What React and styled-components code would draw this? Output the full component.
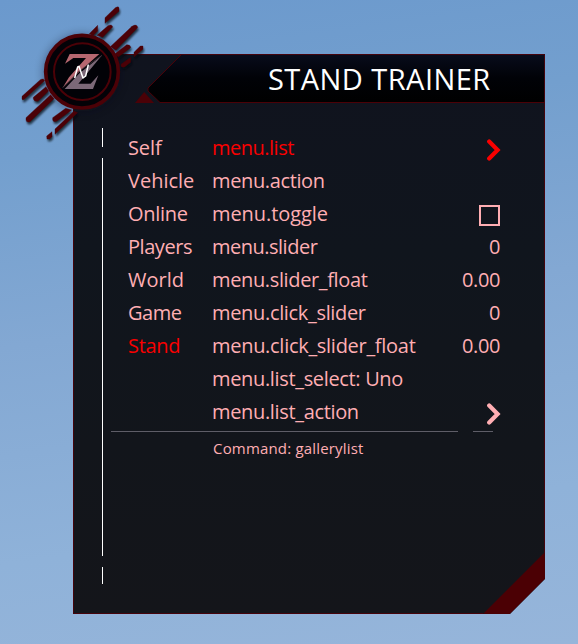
import React from "react";
import styled, { createGlobalStyle } from "styled-components";

const Global = createGlobalStyle`
  * { box-sizing: border-box; }
  html, body { margin: 0; height: 100%; overflow: hidden; }
  body { font-family: "Open Sans", "Noto Sans", sans-serif; }
`;

const Scene = styled.main`
  position: relative;
  width: 578px;
  height: 644px;
  padding: 53px 33px 30px 73px;
  background: linear-gradient(172deg, #6b99cd 0%, #739fce 22%, #83a8d3 48%, #8fb2d9 78%, #96b5da 100%);
`;

const Panel = styled.section`
  position: relative;
  display: flex;
  flex-direction: column;
  width: 472px;
  height: 561px;
  background: linear-gradient(#10131e, #10151d 35%, #12151b 70%, #14151a);
  clip-path: polygon(0 1px, 100% 1px, 100% 526px, 437px 100%, 0 100%);
`;

const Frame = styled.svg`
  position: absolute;
  inset: 0;
`;

const Header = styled.header`
  position: relative;
  height: 50px;
  padding-left: 195px;
  color: #fff;
  font-size: 29px;
  line-height: 52px;
  white-space: nowrap;
  letter-spacing: ${(p) => p.$spacing}px;
`;

const Content = styled.div`
  position: relative;
  display: grid;
  grid-template-columns: 26px 84px 288px;
  padding: 25px 0 0 29px;
`;

const Rail = styled.div`
  display: flex;
  flex-direction: column;
  gap: 11px;
  width: 1px;
`;

const RailPart = styled.i`
  height: ${(p) => p.$h}px;
  background: #fff;
`;

const List = styled.div`
  display: flex;
  flex-direction: column;
  padding-top: 3px;
`;

const Row = styled.div`
  display: flex;
  justify-content: space-between;
  height: 33px;
  line-height: 33px;
  font-size: 20px;
  white-space: nowrap;
  color: ${(p) => (p.$active ? "#fa0000" : "#ffaeb3")};
`;

const Label = styled.span`
  letter-spacing: ${(p) => p.$spacing || 0}px;
`;

const Chevron = styled.svg`
  width: 15px;
  height: 22px;
  margin: 8px -1px 0 0;
`;

const Checkbox = styled.span`
  width: 21px;
  height: 21px;
  margin-top: 8px;
  border: 2px solid #ffaeb3;
`;

const Divider = styled.div`
  display: flex;
  gap: 15px;
  margin: 3px 0 0 -101px;
`;

const Line = styled.i`
  width: ${(p) => p.$w}px;
  height: 1px;
  background: #5e5d67;
`;

const Help = styled.div`
  padding: 5px 0 0 1px;
  color: #ffaeb3;
  font-size: 15px;
  line-height: 23px;
  white-space: nowrap;
  letter-spacing: ${(p) => p.$spacing}px;
`;

const Emblem = styled.svg`
  position: absolute;
  left: 10px;
  top: 0;
`;

const tabs = [
  ["Self", -0.1],
  ["Vehicle", 0],
  ["Online", -0.3],
  ["Players", -0.45],
  ["World", 0],
  ["Game", -0.5],
  ["Stand", -0.3],
];

const commands = [
  ["menu.list", -0.5, "arrow"],
  ["menu.action", -0.37],
  ["menu.toggle", -0.08, "box"],
  ["menu.slider", -0.5, "0"],
  ["menu.slider_float", -0.36, "0.00"],
  ["menu.click_slider", -0.33, "0"],
  ["menu.click_slider_float", -0.29, "0.00"],
  ["menu.list_select: Uno", -0.34],
  ["menu.list_action", -0.34, "arrow"],
];

function Value({ kind }) {
  if (!kind) return null;
  if (kind === "box") return <Checkbox />;
  if (kind === "arrow")
    return (
      <Chevron viewBox="0 0 15 22">
        <path d="M3.2 2.6 L11.6 11 L3.2 19.4" fill="none" stroke="currentColor" strokeWidth="4.2" strokeLinecap="round" />
      </Chevron>
    );
  return <Label $spacing={-0.4}>{kind}</Label>;
}

const streaks = [
  "M285 53L316 23Q326 18 327 23V34L285 70Z",
  "M238 101L263 76V93L249 107Z",
  "M261 106L294 77Q306 71 308 81L278 112Z",
  "M301 140L366 79Q382 70 383 83L318 150Z",
  "M313 163L350 134Q362 133 362 143L325 171Z",
  "M333 193L362 172V187L344 201Q335 203 333 198Z",
  "M372 157L391 138H399V148L372 171Z",
  "M36 289L91 239Q102 234 104 242L43 298Q36 302 36 296Z",
  "M70 292L108 260L116 273L84 304Q72 305 70 296Z",
  "M48 353L122 284L132 296L60 365Q49 369 48 359Z",
  "M128 353L167 325L185 330L141 363Q130 369 128 359Z",
  "M110 408L126 395V410L119 417H111Z",
  "M135 387L192 333L203 338L135 403Z",
];

function Logo() {
  return (
    <Emblem width="150" height="150" viewBox="0 0 450 450">
      <defs>
        <filter id="soft" x="-20%" y="-20%" width="140%" height="140%">
          <feGaussianBlur stdDeviation="2.5" />
        </filter>
        <filter id="halo" x="-30%" y="-30%" width="160%" height="160%">
          <feGaussianBlur stdDeviation="14" />
        </filter>
      </defs>
      <circle cx="216" cy="219" r="116" fill="#07111f" opacity=".38" filter="url(#halo)" />
      <g fill="#05070d" opacity=".75" transform="translate(3 7)" filter="url(#soft)">
        {streaks.map((d) => <path key={d} d={d} />)}
      </g>
      <g fill="#4b0107" stroke="#4b0107" strokeWidth="1">{streaks.map((d) => <path key={d} d={d} />)}</g>
      <circle cx="216" cy="215" r="109" fill="#030207" stroke="#4b0107" strokeWidth="11" />
      <circle cx="217" cy="215" r="85" fill="#020207" stroke="#4b0107" strokeWidth="6" />
      <path d="M179 162H268L207 216L158 263L177 232L228 174H190L165 191Z" fill="#b66770" />
      <path d="M276 166L205 251H242L265 226L249 267H164L207 221Z" fill="#7b6877" />
      <path d="M276 166L207 213L158 263" fill="none" stroke="#4d3941" strokeWidth="2" />
      <path d="M194 234L203 201L207 199L219 234L227 228L235 194" fill="none" stroke="#fff" strokeWidth="4.5" strokeLinejoin="round" />
    </Emblem>
  );
}

export default function App() {
  return (
    <>
      <Global />
      <Scene>
        <Panel>
          <Frame width="472" height="561" viewBox="0 0 472 561">
            <defs>
              <linearGradient id="head" x1="0" y1="0" x2="0" y2="1">
                <stop offset="0" stopColor="#080c1c" />
                <stop offset=".5" stopColor="#010207" />
                <stop offset="1" stopColor="#000" />
              </linearGradient>
            </defs>
            <path d="M472 1V49.5H87L75 38V35L108.5 1.5H472Z" fill="url(#head)" />
            <path d="M108.5 1.5L75 35V38L87 49.5H472" fill="none" stroke="#4b0107" />
            <path d="M62 50L71.2 39L81 50Z" fill="#4b0107" />
            <path d="M472 499V526L437 561H410Z" fill="#4b0004" />
            <path d="M.5 0V560.5H410M45 1.5H471.5V500" fill="none" stroke="#45040c" />
          </Frame>
          <Header $spacing={0.45}>STAND TRAINER</Header>
          <Content>
            <Rail>
              <RailPart $h={19} />
              <RailPart $h={398} />
              <RailPart $h={17} />
            </Rail>
            <List>
              {tabs.map(([name, s]) => (
                <Row key={name} $active={name === "Stand"}><Label $spacing={s}>{name}</Label></Row>
              ))}
            </List>
            <List>
              {commands.map(([name, s, kind], i) => (
                <Row key={name} $active={i === 0}>
                  <Label $spacing={s}>{name}</Label>
                  <Value kind={kind} />
                </Row>
              ))}
              <Divider><Line $w={347} /><Line $w={20} /></Divider>
              <Help $spacing={0.18}>Command: gallerylist</Help>
            </List>
          </Content>
        </Panel>
        <Logo />
      </Scene>
    </>
  );
}
